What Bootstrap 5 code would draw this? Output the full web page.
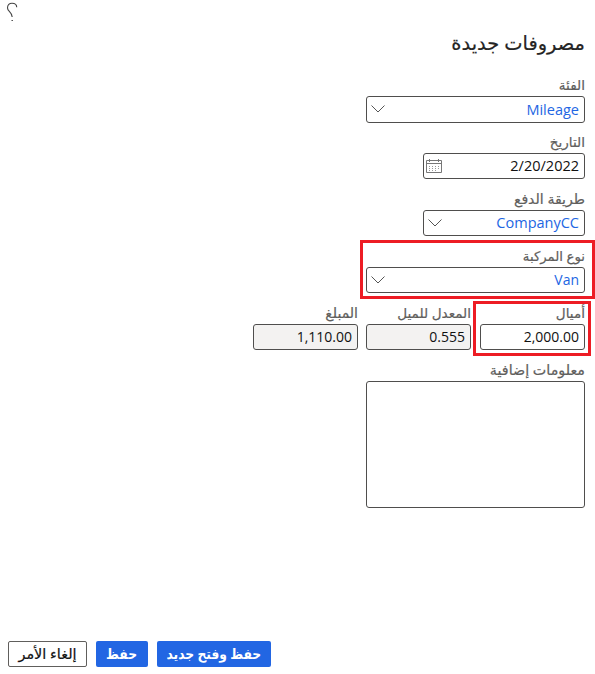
<!DOCTYPE html>
<html lang="ar" dir="rtl">
<head>
<meta charset="utf-8">
<meta name="viewport" content="width=device-width, initial-scale=1">
<title>مصروفات جديدة</title>
<link href="https://cdn.jsdelivr.net/npm/bootstrap@5.3.0/dist/css/bootstrap.min.css" rel="stylesheet">
<style>
  body { font-family: "Noto Sans", "DejaVu Sans", sans-serif; color: #242424; background: #fff; }
  .expense-page { width: 595px; height: 674px; overflow: hidden; }
  .help-bar { height: 24px; padding: 2px 0 0 5px; }
  .page-title { height: 42px; line-height: 38px; font-size: 19.4px; margin: 0; padding-right: 10px; font-weight: 400; white-space: nowrap; -webkit-text-stroke: .2px; }
  .form-area { padding-right: 10px; }
  .field { width: 219px; height: 57px; }
  .field-mid { width: 162px; }
  .field-sm { width: 105px; height: 57px; }
  .field-label { display: block; height: 30px; line-height: 18px; padding-top: 10px; font-size: 13.6px; color: #605e5c; white-space: nowrap; -webkit-text-stroke: .2px; }
  .label-wide { font-size: 14.1px; }
  .label-notes { font-size: 14.3px; }
  .label-tight { font-size: 13.3px; }
  .field-box { height: 26px; border: 1px solid #4f4e4d; border-radius: 3px; padding: 0 5px 0 4px; font: 14px/24px "Open Sans", sans-serif; color: #111; }
  .field-box.tall { height: 27px; line-height: 25px; }
  .field-box.wide { font-size: 14.5px; }
  .field-box.link { color: #2266e3; }
  .field-box.locked { background: #f3f2f1; }
  .notes-box { width: 219px; height: 127px; border: 1px solid #4f4e4d; border-radius: 3px; resize: none; padding: 4px; display: block; }
  .amounts { gap: 9px; }
  .amount-total { margin-right: -1px; }
  .chevron { width: 15px; height: 10px; margin-bottom: 1px; }
  .calendar { margin-left: -2px; }
  .callout-frame { border: 3px solid #ed1c24; pointer-events: none; }
  .callout-vehicle { left: 360px; top: 240px; width: 235px; height: 59px; }
  .callout-miles { left: 473px; top: 301px; width: 118px; height: 55px; }
  .action-bar { padding: 0 0 7px 8px; gap: 9px; direction: ltr; }
  .action { height: 26px; padding: 0; border-radius: 2px; font-size: 14px; line-height: 24px; white-space: nowrap; direction: rtl; }
  .action-main { background: #2266e3; color: #fff; font-weight: 700; border: 0; }
  .action-main span { display: inline-block; transform: scaleX(.88); margin: 0 -8px; }
  .action-plain { width: 79px; background: #fff; color: #111; border: 1px solid #605e5c; font-size: 14.4px; -webkit-text-stroke: .2px; }
  .action-save { width: 52px; }
  .action-save-new { width: 114px; }
</style>
<script src="https://cdn.jsdelivr.net/npm/bootstrap@5.3.0/dist/js/bootstrap.bundle.min.js" defer></script>
</head>
<body>
<main class="expense-page d-flex flex-column position-relative">
  <div class="help-bar d-flex justify-content-end">
    <svg width="14" height="20" viewBox="0 0 14 20" fill="none" stroke="#444" stroke-width="1.1"><path d="M2.5 6C2.5 2.8 4.4 1.2 7 1.2S11.7 2.8 11.7 5.2"/><path d="M2.5 6C2.5 9.5 7.2 10 7.2 15"/><path d="M6.5 18.5h1.4"/></svg>
  </div>
  <h1 class="page-title">مصروفات جديدة</h1>
  <form class="form-area d-flex flex-column align-items-start">
    <div class="field">
      <label class="field-label">الفئة</label>
      <div class="field-box tall wide link d-flex justify-content-between align-items-center"><span dir="ltr">Mileage</span>
        <svg class="chevron" viewBox="0 0 15 10" fill="none" stroke="#555"><path d="M.5 1.5L7 8l6.5-6.5"/></svg></div>
    </div>
    <div class="field field-mid">
      <label class="field-label">التاريخ</label>
      <div class="field-box wide d-flex justify-content-between align-items-center"><span dir="ltr">2/20/2022</span>
        <svg class="calendar" width="16" height="16" viewBox="0 0 16 16" fill="none" stroke="#777"><path d="M.5 2.5h15v12H.5zM.5 5.5h15M3.5 1v3M12.5 1v3"/><path d="M3 8.5h11M3 10.5h11M3 12.5h8" stroke="#999" stroke-dasharray="1 2"/></svg></div>
    </div>
    <div class="field field-mid">
      <label class="field-label label-wide">طريقة الدفع</label>
      <div class="field-box wide link d-flex justify-content-between align-items-center"><span dir="ltr">CompanyCC</span>
        <svg class="chevron" viewBox="0 0 15 10" fill="none" stroke="#555"><path d="M.5 1.5L7 8l6.5-6.5"/></svg></div>
    </div>
    <div class="field">
      <label class="field-label label-tight">نوع المركبة</label>
      <div class="field-box link d-flex justify-content-between align-items-center"><span dir="ltr">Van</span>
        <svg class="chevron" viewBox="0 0 15 10" fill="none" stroke="#555"><path d="M.5 1.5L7 8l6.5-6.5"/></svg></div>
    </div>
    <div class="amounts d-flex">
      <div class="field-sm"><label class="field-label">أميال</label><div class="field-box"><span dir="ltr">2,000.00</span></div></div>
      <div class="field-sm"><label class="field-label">المعدل للميل</label><div class="field-box locked"><span dir="ltr">0.555</span></div></div>
      <div class="field-sm amount-total"><label class="field-label label-wide">المبلغ</label><div class="field-box locked"><span dir="ltr">1,110.00</span></div></div>
    </div>
    <div class="field">
      <label class="field-label label-notes" for="notes">معلومات إضافية</label>
      <textarea class="notes-box" id="notes"></textarea>
    </div>
  </form>
  <div class="action-bar d-flex mt-auto">
    <button type="button" class="btn action action-plain">إلغاء الأمر</button>
    <button type="button" class="btn action action-main action-save"><span>حفظ</span></button>
    <button type="button" class="btn action action-main action-save-new"><span>حفظ وفتح جديد</span></button>
  </div>
  <div class="callout-frame callout-vehicle position-absolute"></div>
  <div class="callout-frame callout-miles position-absolute"></div>
</main>
</body>
</html>
